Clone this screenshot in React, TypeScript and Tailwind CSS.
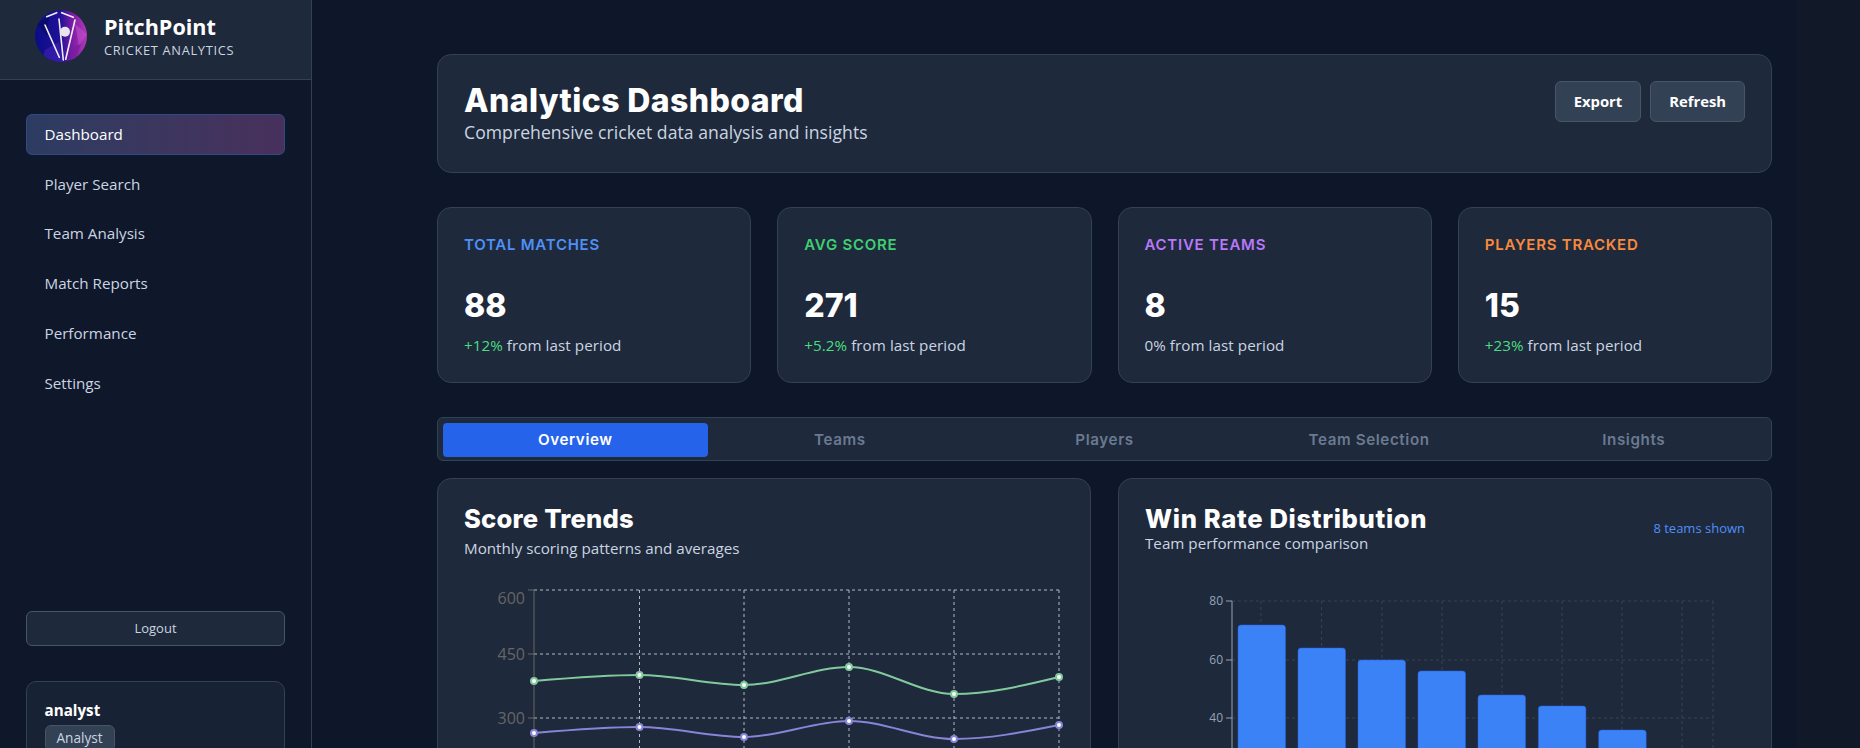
import * as React from "react";

const nav = ["Dashboard", "Player Search", "Team Analysis", "Match Reports", "Performance", "Settings"];

const stats = [
  { label: "TOTAL MATCHES", color: "text-[#4f8ff7]", value: "88", delta: "+12%", up: true },
  { label: "AVG SCORE", color: "text-[#3ecf72]", value: "271", delta: "+5.2%", up: true },
  { label: "ACTIVE TEAMS", color: "text-[#b978f9]", value: "8", delta: "0%", up: false },
  { label: "PLAYERS TRACKED", color: "text-[#f98a3c]", value: "15", delta: "+23%", up: true },
];

const tabs = ["Overview", "Teams", "Players", "Team Selection", "Insights"];

const heading = "font-['Inter','Liberation_Sans',sans-serif]";

function Logo() {
  return (
    <svg width="52" height="52" viewBox="0 0 52 52" className="mt-[10px] shrink-0">
      <defs>
        <linearGradient id="logoBg" x1="0" y1="0" x2="1" y2="0">
          <stop offset="0" stopColor="#0a0c86" />
          <stop offset="0.5" stopColor="#221296" />
          <stop offset="0.72" stopColor="#7d1ca6" />
          <stop offset="1" stopColor="#b23ab6" />
        </linearGradient>
        <clipPath id="logoClip">
          <circle cx="26" cy="26" r="26" />
        </clipPath>
      </defs>
      <g clipPath="url(#logoClip)">
        <rect width="52" height="52" fill="url(#logoBg)" />
        <polygon points="10,40 24,32 28,52 6,52" fill="#3a1fb0" opacity="0.7" />
        <polygon points="40,14 52,24 44,36" fill="#c04cc8" opacity="0.6" />
        <polygon points="34,38 46,34 40,50" fill="#7a1c9c" opacity="0.7" />
        <polygon points="2,14 14,6 12,26" fill="#070a5e" opacity="0.7" />
      </g>
      <g stroke="#f1eef8" strokeWidth="1.6" strokeLinecap="round" fill="none">
        <line x1="10" y1="15" x2="24.3" y2="47.3" />
        <line x1="24" y1="9" x2="28.3" y2="50" />
        <line x1="40" y1="10" x2="30.7" y2="49.3" />
        <line x1="11.7" y1="6.7" x2="21.7" y2="2.7" />
        <line x1="26.7" y1="2.7" x2="38.3" y2="7.3" />
      </g>
      <circle cx="30" cy="21.7" r="5" fill="#e6e4ec" />
    </svg>
  );
}

// same shape as a monotone line chart
function monotone(xs: number[], ys: number[]) {
  const n = xs.length;
  const s: number[] = [];
  for (let i = 0; i < n - 1; i++) s.push((ys[i + 1] - ys[i]) / (xs[i + 1] - xs[i]));
  const m: number[] = new Array(n).fill(0);
  for (let i = 1; i < n - 1; i++) {
    const h0 = xs[i] - xs[i - 1];
    const h1 = xs[i + 1] - xs[i];
    const p = (s[i - 1] * h1 + s[i] * h0) / (h0 + h1);
    m[i] = (Math.sign(s[i - 1]) + Math.sign(s[i])) * Math.min(Math.abs(s[i - 1]), Math.abs(s[i]), 0.5 * Math.abs(p));
  }
  m[0] = (3 * s[0] - m[1]) / 2;
  m[n - 1] = (3 * s[n - 2] - m[n - 2]) / 2;
  let d = `M${xs[0]},${ys[0]}`;
  for (let i = 0; i < n - 1; i++) {
    const dx = (xs[i + 1] - xs[i]) / 3;
    d += ` C${xs[i] + dx},${ys[i] + m[i] * dx} ${xs[i + 1] - dx},${ys[i + 1] - m[i + 1] * dx} ${xs[i + 1]},${ys[i + 1]}`;
  }
  return d;
}

function ScoreChart() {
  const xs = [96, 201.5, 306, 411, 516, 621];
  const green = [101, 95, 105, 87, 114, 97];
  const purple = [153, 147, 157, 141, 159, 145];
  return (
    <svg width="654" height="180" viewBox="0 0 654 180" className="block">
      <g stroke="#cbd5e1" strokeWidth="1" strokeDasharray="3 3" opacity="0.85">
        {[10, 74, 138].map((y) => (
          <line key={y} x1="96" x2="621" y1={y} y2={y} />
        ))}
        {xs.slice(1).map((x) => (
          <line key={x} x1={x} x2={x} y1="10" y2="180" />
        ))}
      </g>
      <line x1="96" x2="96" y1="10" y2="180" stroke="#666" />
      {[10, 74, 138].map((y) => (
        <line key={y} x1="90" x2="96" y1={y} y2={y} stroke="#666" />
      ))}
      <g fill="#666" fontSize="16" textAnchor="end" fontFamily="'Open Sans', sans-serif">
        <text x="87" y="24">600</text>
        <text x="87" y="80">450</text>
        <text x="87" y="144">300</text>
      </g>
      <path d={monotone(xs, green)} fill="none" stroke="#82ca9d" strokeWidth="2" />
      <path d={monotone(xs, purple)} fill="none" stroke="#8884d8" strokeWidth="2" />
      {xs.map((x, i) => (
        <circle key={x} cx={x} cy={green[i]} r="3" fill="#fff" stroke="#82ca9d" strokeWidth="2" />
      ))}
      {xs.map((x, i) => (
        <circle key={x} cx={x} cy={purple[i]} r="3" fill="#fff" stroke="#8884d8" strokeWidth="2" />
      ))}
    </svg>
  );
}

function WinChart() {
  const bars = [
    { x: 1238, top: 624 },
    { x: 1298, top: 647 },
    { x: 1358, top: 659 },
    { x: 1418, top: 670 },
    { x: 1478, top: 694 },
    { x: 1538.4, top: 705 },
    { x: 1598.7, top: 729 },
  ];
  const ox = 1119;
  const oy = 590;
  const grid = [1261, 1321.6, 1382, 1442, 1502, 1562, 1622, 1682, 1713];
  return (
    <svg width="654" height="170" viewBox="0 0 654 170" className="block">
      <g stroke="#475569" strokeWidth="1" strokeDasharray="3 3" opacity="0.6">
        {[600, 659, 717].map((y) => (
          <line key={y} x1={1232 - ox} x2={1713 - ox} y1={y - oy} y2={y - oy} />
        ))}
        {grid.map((x) => (
          <line key={x} x1={x - ox} x2={x - ox} y1={10} y2={170} />
        ))}
      </g>
      <line x1={1232 - ox} x2={1232 - ox} y1="10" y2="170" stroke="#94a3b8" />
      {[600, 659, 717].map((y) => (
        <line key={y} x1={1226 - ox} x2={1232 - ox} y1={y - oy} y2={y - oy} stroke="#94a3b8" />
      ))}
      <g fill="#94a3b8" fontSize="12" textAnchor="end" fontFamily="'Open Sans', sans-serif">
        <text x={1223 - ox} y="14">80</text>
        <text x={1223 - ox} y="73">60</text>
        <text x={1223 - ox} y="131">40</text>
      </g>
      {bars.map((b) => (
        <path
          key={b.x}
          d={`M${b.x - ox},170 V${b.top - oy + 3} q0,-3 3,-3 h41.5 q3,0 3,3 V170 Z`}
          fill="#3b82f6"
          stroke="#2563eb"
          strokeWidth="0.5"
        />
      ))}
    </svg>
  );
}

export default function App() {
  return (
    <div className="flex h-[748px] overflow-hidden bg-[#111827] font-['Open_Sans','Noto_Sans',sans-serif] text-white">
      {/* sidebar */}
      <aside className="flex h-[781px] w-[312px] shrink-0 flex-col border-r border-[#334155] bg-[#0f172a]">
        <div className="flex h-[80px] items-start gap-[16px] border-b border-[#334155] bg-[#1e293b] pl-[35px]">
          <Logo />
          <div className="mt-[13px] ml-[1px]">
            <div className="text-[21.6px] leading-[27px] font-bold text-white">PitchPoint</div>
            <div className="mt-[1px] text-[12.8px] leading-[18px] tracking-[0.7px] text-[#cbd5e1]">CRICKET ANALYTICS</div>
          </div>
        </div>
        <nav className="flex flex-col gap-[8.7px] px-[26px] pt-[34px]">
          {nav.map((item, i) => (
            <div
              key={item}
              className={
                i === 0
                  ? "flex h-[41px] items-center rounded-md border border-[#2f4a86] bg-gradient-to-r from-[#2c3c61] to-[#47305c] px-[17.5px] text-[15.2px] font-medium text-white"
                  : "flex h-[41px] items-center rounded-md border border-transparent px-[17.5px] text-[15.2px] text-[#cbd5e1]"
              }
            >
              {item}
            </div>
          ))}
        </nav>
        <div className="mt-auto px-[26px]">
          <button className="flex h-[35px] w-full items-center justify-center rounded-md border border-[#475569] bg-[#1e293b] text-[13px] text-[#cbd5e1]">
            Logout
          </button>
          <div className="mt-[35px] h-[100px] rounded-[10px] border border-[#334155] bg-[#182235] px-[17.5px] pt-[18px]">
            <div className="text-[15.2px] leading-[20px] font-bold text-white">analyst</div>
            <span className="mt-[5px] inline-block rounded-md border border-[#475569] bg-[#334155] px-[11px] text-[13.6px] leading-[24px] text-[#cbd5e1]">
              Analyst
            </span>
          </div>
        </div>
      </aside>

      {/* main */}
      <div className="w-[1485px] shrink-0 bg-[#0e1629] pt-[54px] pr-[25px] pl-[125px]">
        <section className="flex h-[119px] items-start justify-between rounded-[14px] border border-[#334155] bg-[#1e293b] p-[26px]">
          <div className="pt-[2px]">
            <h1 className={`${heading} text-[32px] leading-[36px] font-extrabold tracking-[0.4px] text-white`}>Analytics Dashboard</h1>
            <p className="mt-[1px] text-[17.6px] leading-[24px] tracking-[0.05px] text-[#cbd5e1]">Comprehensive cricket data analysis and insights</p>
          </div>
          <div className="flex gap-[9px]">
            <button className="h-[41px] rounded-md border border-[#475569] bg-[#334155] px-[18px] text-[14.8px] font-bold text-white">Export</button>
            <button className="h-[41px] rounded-md border border-[#475569] bg-[#334155] px-[18px] text-[14.8px] font-bold text-white">Refresh</button>
          </div>
        </section>

        <section className="mt-[34px] grid grid-cols-4 gap-[26px]">
          {stats.map((s) => (
            <div key={s.label} className="h-[176px] rounded-[14px] border border-[#334155] bg-[#1e293b] px-[26px] pt-[27px]">
              <div className={`${heading} ${s.color} text-[15px] leading-[20px] font-semibold tracking-[0.75px]`}>{s.label}</div>
              <div className={`${heading} mt-[29px] text-[32px] leading-[44px] font-extrabold text-white`}>{s.value}</div>
              <div className="mt-[7px] text-[15.2px] leading-[20px] tracking-[0.06px] text-[#cbd5e1]">
                <span className={s.up ? "text-[#4ade80]" : ""}>{s.delta}</span> from last period
              </div>
            </div>
          ))}
        </section>

        <section className="mt-[34px] grid h-[44px] grid-cols-5 rounded-md border border-[#334155] bg-[#1e293b] px-[5px] pt-[5px] pb-[3px]">
          {tabs.map((t, i) => (
            <div
              key={t}
              className={
                i === 0
                  ? `${heading} flex items-center justify-center rounded bg-[#2563eb] text-[15.2px] font-semibold tracking-[0.6px] text-white`
                  : `${heading} flex items-center justify-center text-[15.2px] font-semibold tracking-[0.6px] text-[#6b7a90]`
              }
            >
              {t}
            </div>
          ))}
        </section>

        <section className="mt-[17px] grid grid-cols-2 gap-[27px]">
          <div className="h-[300px] rounded-[14px] border border-[#334155] bg-[#1e293b]">
            <div className="px-[26px] pt-[24px]">
              <h2 className={`${heading} text-[25.6px] leading-[32px] font-extrabold tracking-[0.2px] text-white`}>Score Trends</h2>
              <p className="mt-[3px] text-[15.2px] leading-[20px] text-[#cbd5e1]">Monthly scoring patterns and averages</p>
            </div>
            <div className="mt-[22px]">
              <ScoreChart />
            </div>
          </div>
          <div className="h-[300px] rounded-[14px] border border-[#334155] bg-[#1e293b]">
            <div className="flex items-start justify-between px-[26px] pt-[24px]">
              <div>
                <h2 className={`${heading} text-[25.6px] leading-[32px] font-extrabold tracking-[0.65px] text-white`}>Win Rate Distribution</h2>
                <p className="-mt-[2px] text-[15.2px] leading-[20px] text-[#cbd5e1]">Team performance comparison</p>
              </div>
              <span className="mt-[16px] text-[13px] leading-[18px] text-[#4f8ff7]">8 teams shown</span>
            </div>
            <div className="mt-[38px]">
              <WinChart />
            </div>
          </div>
        </section>
      </div>
    </div>
  );
}
